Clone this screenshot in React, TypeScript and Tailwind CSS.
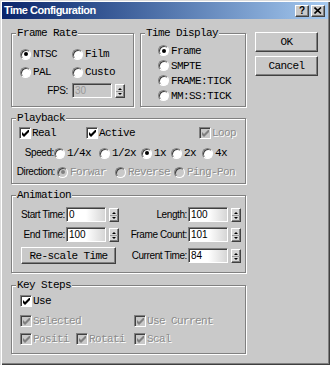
import React from "react";

const MONO = "font-['Liberation_Mono',monospace] text-[11px] tracking-[-0.6px] leading-[12px]";
const SANS = "font-['Liberation_Sans',Arial,sans-serif] text-[10px] tracking-[-0.4px] leading-[12px] text-black";
const DIS = "text-[#8c8c8c] [text-shadow:1px_1px_0_#fff]";
const SUNKEN = "border border-t-[#808080] border-l-[#808080] border-b-white border-r-white shadow-[inset_1px_1px_0_#404040]";
const RAISED = "border border-t-white border-l-white border-b-[#404040] border-r-[#404040] shadow-[inset_-1px_-1px_0_#808080]";

function Radio({ label, checked, disabled, className }: {
  label: string;
  checked?: boolean;
  disabled?: boolean;
  className?: string;
}) {
  return (
    <div className={`flex items-center ${className ?? ""}`}>
      <span className={`flex h-[11px] w-[11px] shrink-0 items-center justify-center rounded-full ${SUNKEN} ${disabled ? "bg-[#c9c9c9]" : "bg-white"}`}>
        {checked && <span className={`h-[4px] w-[4px] rounded-full ${disabled ? "bg-[#808080]" : "bg-black"}`} />}
      </span>
      <span className={`ml-[2px] whitespace-nowrap ${MONO} ${disabled ? DIS : "text-black"}`}>{label}</span>
    </div>
  );
}

function Check({ label, disabled, className }: {
  label: string;
  disabled?: boolean;
  className?: string;
}) {
  return (
    <div className={`flex items-center ${className ?? ""}`}>
      <span className={`flex h-[12px] w-[12px] shrink-0 items-center justify-center ${SUNKEN} ${disabled ? "bg-[#c9c9c9]" : "bg-white"}`}>
        <svg width="7" height="7" viewBox="0 0 7 7" className="mt-px ml-px">
          <polygon points="0,2 2,4 7,-1 7,2 2,7 0,5" fill={disabled ? "#808080" : "#000"} />
        </svg>
      </span>
      <span className={`ml-[1px] whitespace-nowrap ${MONO} ${disabled ? DIS : "text-black"}`}>{label}</span>
    </div>
  );
}

function Spin({ className }: { className?: string }) {
  return (
    <span className={`flex h-[14px] w-[10px] shrink-0 ${RAISED} bg-[#d6d6d6] ${className ?? ""}`}>
      <svg width="8" height="12" viewBox="0 0 8 12">
        <polygon points="2,5 4,3 6,5" fill="#000" />
        <line x1="0" y1="6.5" x2="8" y2="6.5" stroke="#9a9a9a" strokeWidth="1" />
        <polygon points="2,8 6,8 4,10" fill="#000" />
      </svg>
    </span>
  );
}

function Input({ value, disabled, className }: { value: string; disabled?: boolean; className?: string }) {
  return (
    <span className={`flex h-[15px] w-[40px] shrink-0 items-center pl-[2px] ${SUNKEN} ${disabled ? "bg-[#c9c9c9]" : "bg-linear-to-r from-white via-white to-[#d6d6d6]"} ${className ?? ""}`}>
      <span className={`font-['Liberation_Sans',Arial,sans-serif] text-[10px] leading-[12px] ${disabled ? "text-[#9a9a9a]" : "text-black"}`}>{value}</span>
    </span>
  );
}

function Group({ title, className, children }: { title: string; className?: string; children: React.ReactNode }) {
  return (
    <div className={`relative border border-[#808080] shadow-[inset_1px_1px_0_#fff,1px_1px_0_#fff] ${className ?? ""}`}>
      <span className={`absolute left-[4px] top-[-7px] bg-[#c9c9c9] px-[1px] text-black ${MONO}`}>{title}</span>
      {children}
    </div>
  );
}

function Button({ label, className }: { label: string; className?: string }) {
  return (
    <div className={`flex items-center justify-center bg-[#c9c9c9] text-black ${RAISED} ${MONO} ${className ?? ""}`}>
      {label}
    </div>
  );
}

export default function App() {
  return (
    <div className="h-[365px] w-[330px] overflow-hidden bg-[#c9c9c9] p-[2px] shadow-[inset_1px_1px_0_#dcdcdc,inset_2px_2px_0_#fff,inset_-1px_-1px_0_#404040,inset_-2px_-2px_0_#808080]">
      {/* title bar */}
      <div className="flex h-[17px] items-center bg-linear-to-r from-[#0a246a] to-[#a6caf0] pl-[2px] pr-[3px]">
        <span className="font-['Liberation_Sans',Arial,sans-serif] text-[11px] font-bold tracking-[-0.5px] text-white">Time Configuration</span>
        <div className="ml-auto flex gap-[2px]">
          <span className={`flex h-[12px] w-[14px] items-center justify-center bg-[#c9c9c9] ${RAISED} font-['Liberation_Sans',Arial,sans-serif] text-[10px] font-bold leading-none text-black`}>?</span>
          <span className={`flex h-[12px] w-[14px] items-center justify-center bg-[#c9c9c9] ${RAISED}`}>
            <svg width="8" height="7" viewBox="0 0 8 7">
              <path d="M0.5 0.5 L7 6.5 M7 0.5 L0.5 6.5" stroke="#000" strokeWidth="1.6" />
            </svg>
          </span>
        </div>
      </div>

      <div className="pl-[9px]">
        <div className="mt-[14px] flex items-start">
          <Group title="Frame Rate" className="h-[74px] w-[123px] pl-[8px] pt-[12px]">
            <div className="flex h-[16px] items-center">
              <Radio label="NTSC" checked className="w-[52px]" />
              <Radio label="Film" />
            </div>
            <div className="mt-[2px] flex h-[16px] items-center">
              <Radio label="PAL" className="w-[52px]" />
              <Radio label="Custo" />
            </div>
            <div className="mt-[3px] flex items-center">
              <span className={`w-[48px] text-right ${SANS}`}>FPS:</span>
              <Input value="30" disabled className="ml-[4px] h-[14px] w-[38px]" />
              <Spin className="ml-[3px]" />
            </div>
          </Group>

          <Group title="Time Display" className="ml-[6px] h-[74px] w-[106px] pl-[17px] pt-[9px]">
            <Radio label="Frame" checked className="h-[15px]" />
            <Radio label="SMPTE" className="h-[15px]" />
            <Radio label="FRAME:TICK" className="h-[15px]" />
            <Radio label="MM:SS:TICK" className="h-[15px]" />
          </Group>

          <div className="-mt-px ml-[9px] flex w-[63px] flex-col gap-[4px]">
            <Button label="OK" className="h-[20px]" />
            <Button label="Cancel" className="h-[20px]" />
          </div>
        </div>

        <Group title="Playback" className="mt-[11px] h-[66px] w-[235px] pt-[6px]">
          <div className="flex h-[16px] items-center pl-[7px]">
            <Check label="Real" className="w-[67px]" />
            <Check label="Active" className="w-[113px]" />
            <Check label="Loop" disabled />
          </div>
          <div className="mt-[4px] flex h-[16px] items-center">
            <span className={`w-[42px] text-right ${SANS}`}>Speed:</span>
            <Radio label="1/4x" className="w-[45px]" />
            <Radio label="1/2x" className="w-[42px]" />
            <Radio label="1x" checked className="w-[30px]" />
            <Radio label="2x" className="w-[31px]" />
            <Radio label="4x" />
          </div>
          <div className="mt-[3px] flex h-[16px] items-center">
            <span className={`w-[43px] text-right ${SANS}`}>Direction:</span>
            <Radio label="Forwar" checked disabled className="ml-[2px] w-[58px]" />
            <Radio label="Reverse" disabled className="w-[59px]" />
            <Radio label="Ping-Pon" disabled />
          </div>
        </Group>

        <Group title="Animation" className="mt-[11px] h-[78px] w-[235px] pt-[11px]">
          <div className="flex h-[15px] items-center">
            <span className={`w-[53px] text-right ${SANS}`}>Start Time:</span>
            <Input value="0" className="ml-[1px]" />
            <Spin className="ml-[3px]" />
            <span className={`w-[68px] text-right ${SANS}`}>Length:</span>
            <Input value="100" className="ml-[1px]" />
            <Spin className="ml-[3px]" />
          </div>
          <div className="mt-[5px] flex h-[15px] items-center">
            <span className={`w-[53px] text-right ${SANS}`}>End Time:</span>
            <Input value="100" className="ml-[1px]" />
            <Spin className="ml-[3px]" />
            <span className={`w-[68px] text-right ${SANS}`}>Frame Count:</span>
            <Input value="101" className="ml-[1px]" />
            <Spin className="ml-[3px]" />
          </div>
          <div className="mt-[5px] flex h-[17px] items-center">
            <Button label="Re-scale Time" className="ml-[9px] h-[17px] w-[95px]" />
            <span className={`w-[71px] text-right ${SANS}`}>Current Time:</span>
            <Input value="84" className="ml-[1px]" />
            <Spin className="ml-[3px]" />
          </div>
        </Group>

        <Group title="Key Steps" className="mt-[12px] h-[69px] w-[235px] pl-[8px] pt-[8px]">
          <Check label="Use" className="h-[14px]" />
          <div className="mt-[6px] flex h-[14px] items-center">
            <Check label="Selected" disabled className="w-[114px]" />
            <Check label="Use Current" disabled />
          </div>
          <div className="mt-[4px] flex h-[14px] items-center">
            <Check label="Positi" disabled className="w-[56px]" />
            <Check label="Rotati" disabled className="w-[58px]" />
            <Check label="Scal" disabled />
          </div>
        </Group>
      </div>
    </div>
  );
}
